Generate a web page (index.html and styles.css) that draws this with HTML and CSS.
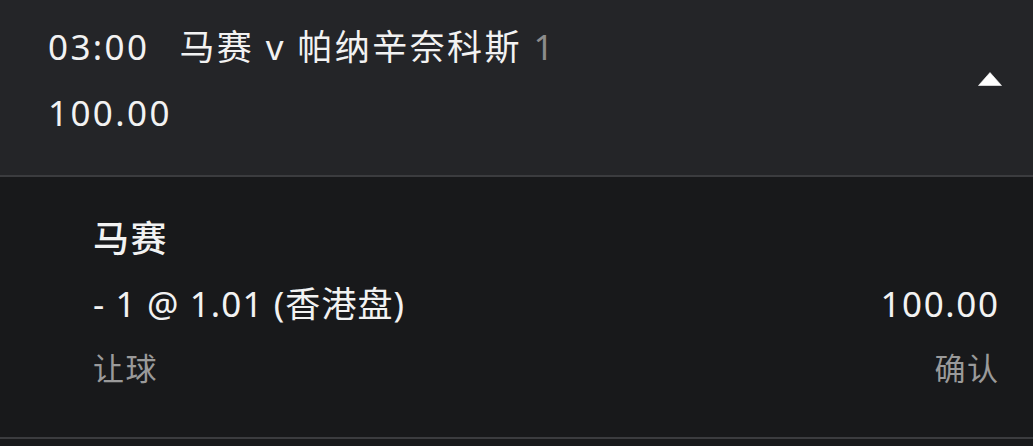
FILE: index.html
```html
<!DOCTYPE html>
<html lang="zh-CN">
<head>
<meta charset="utf-8">
<link rel="stylesheet" href="styles.css">
</head>
<body>
<div class="card">
  <div class="head">
    <div class="head-text">
      <div class="line"><span class="time">03:00</span><span class="match">马赛 v 帕纳辛奈科斯</span> <span class="muted">1</span></div>
      <div class="line">100.00</div>
    </div>
    <svg class="arrow" width="24" height="14" viewBox="0 0 24 14"><path d="M12 0.5 L23.5 13.5 L0.5 13.5 Z" fill="#ffffff" stroke="#ffffff" stroke-width="0.6" stroke-linejoin="round"/></svg>
  </div>
  <div class="body">
    <div class="row team">马赛</div>
    <div class="row split"><span class="bet">- 1 @ 1.01 (香港盘)</span><span>100.00</span></div>
    <div class="row split grey"><span>让球</span><span>确认</span></div>
  </div>
</div>
</body>
</html>
```

FILE: styles.css
```css
html, body {
  margin: 0;
  padding: 0;
  background: #18191b;
}
body {
  width: 1033px;
  height: 446px;
  overflow: hidden;
  font-family: "Noto Sans", "Noto Sans CJK SC", sans-serif;
  color: #f2f2f2;
}
.card {
  display: flex;
  flex-direction: column;
}
.head {
  background: #242528;
  height: 177px;
  box-sizing: border-box;
  padding: 14px 31px 0 48px;
  display: flex;
  align-items: flex-start;
  justify-content: space-between;
  border-bottom: 2px solid #3b3c3f;
}
.line {
  font-size: 35px;
  line-height: 66px;
  letter-spacing: 2.4px;
  white-space: nowrap;
}
.time {
  margin-right: 30px;
}
.muted {
  color: #8c8c8c;
}
.arrow {
  margin-top: 58px;
}
.body {
  background: #18191b;
  height: 262px;
  box-sizing: border-box;
  padding: 29px 35px 0 93px;
  border-bottom: 2px solid #3b3c3f;
}
.row {
  font-size: 35px;
  line-height: 65px;
  letter-spacing: 1.6px;
  white-space: nowrap;
}
.row span:last-child {
  margin-right: -1.6px;
}
.row .bet {
  letter-spacing: 1.1px;
}
.team {
  font-size: 36px;
  font-weight: 500;
}
.split {
  display: flex;
  justify-content: space-between;
}
.grey {
  color: #9a9a9a;
  font-size: 31px;
}
```
